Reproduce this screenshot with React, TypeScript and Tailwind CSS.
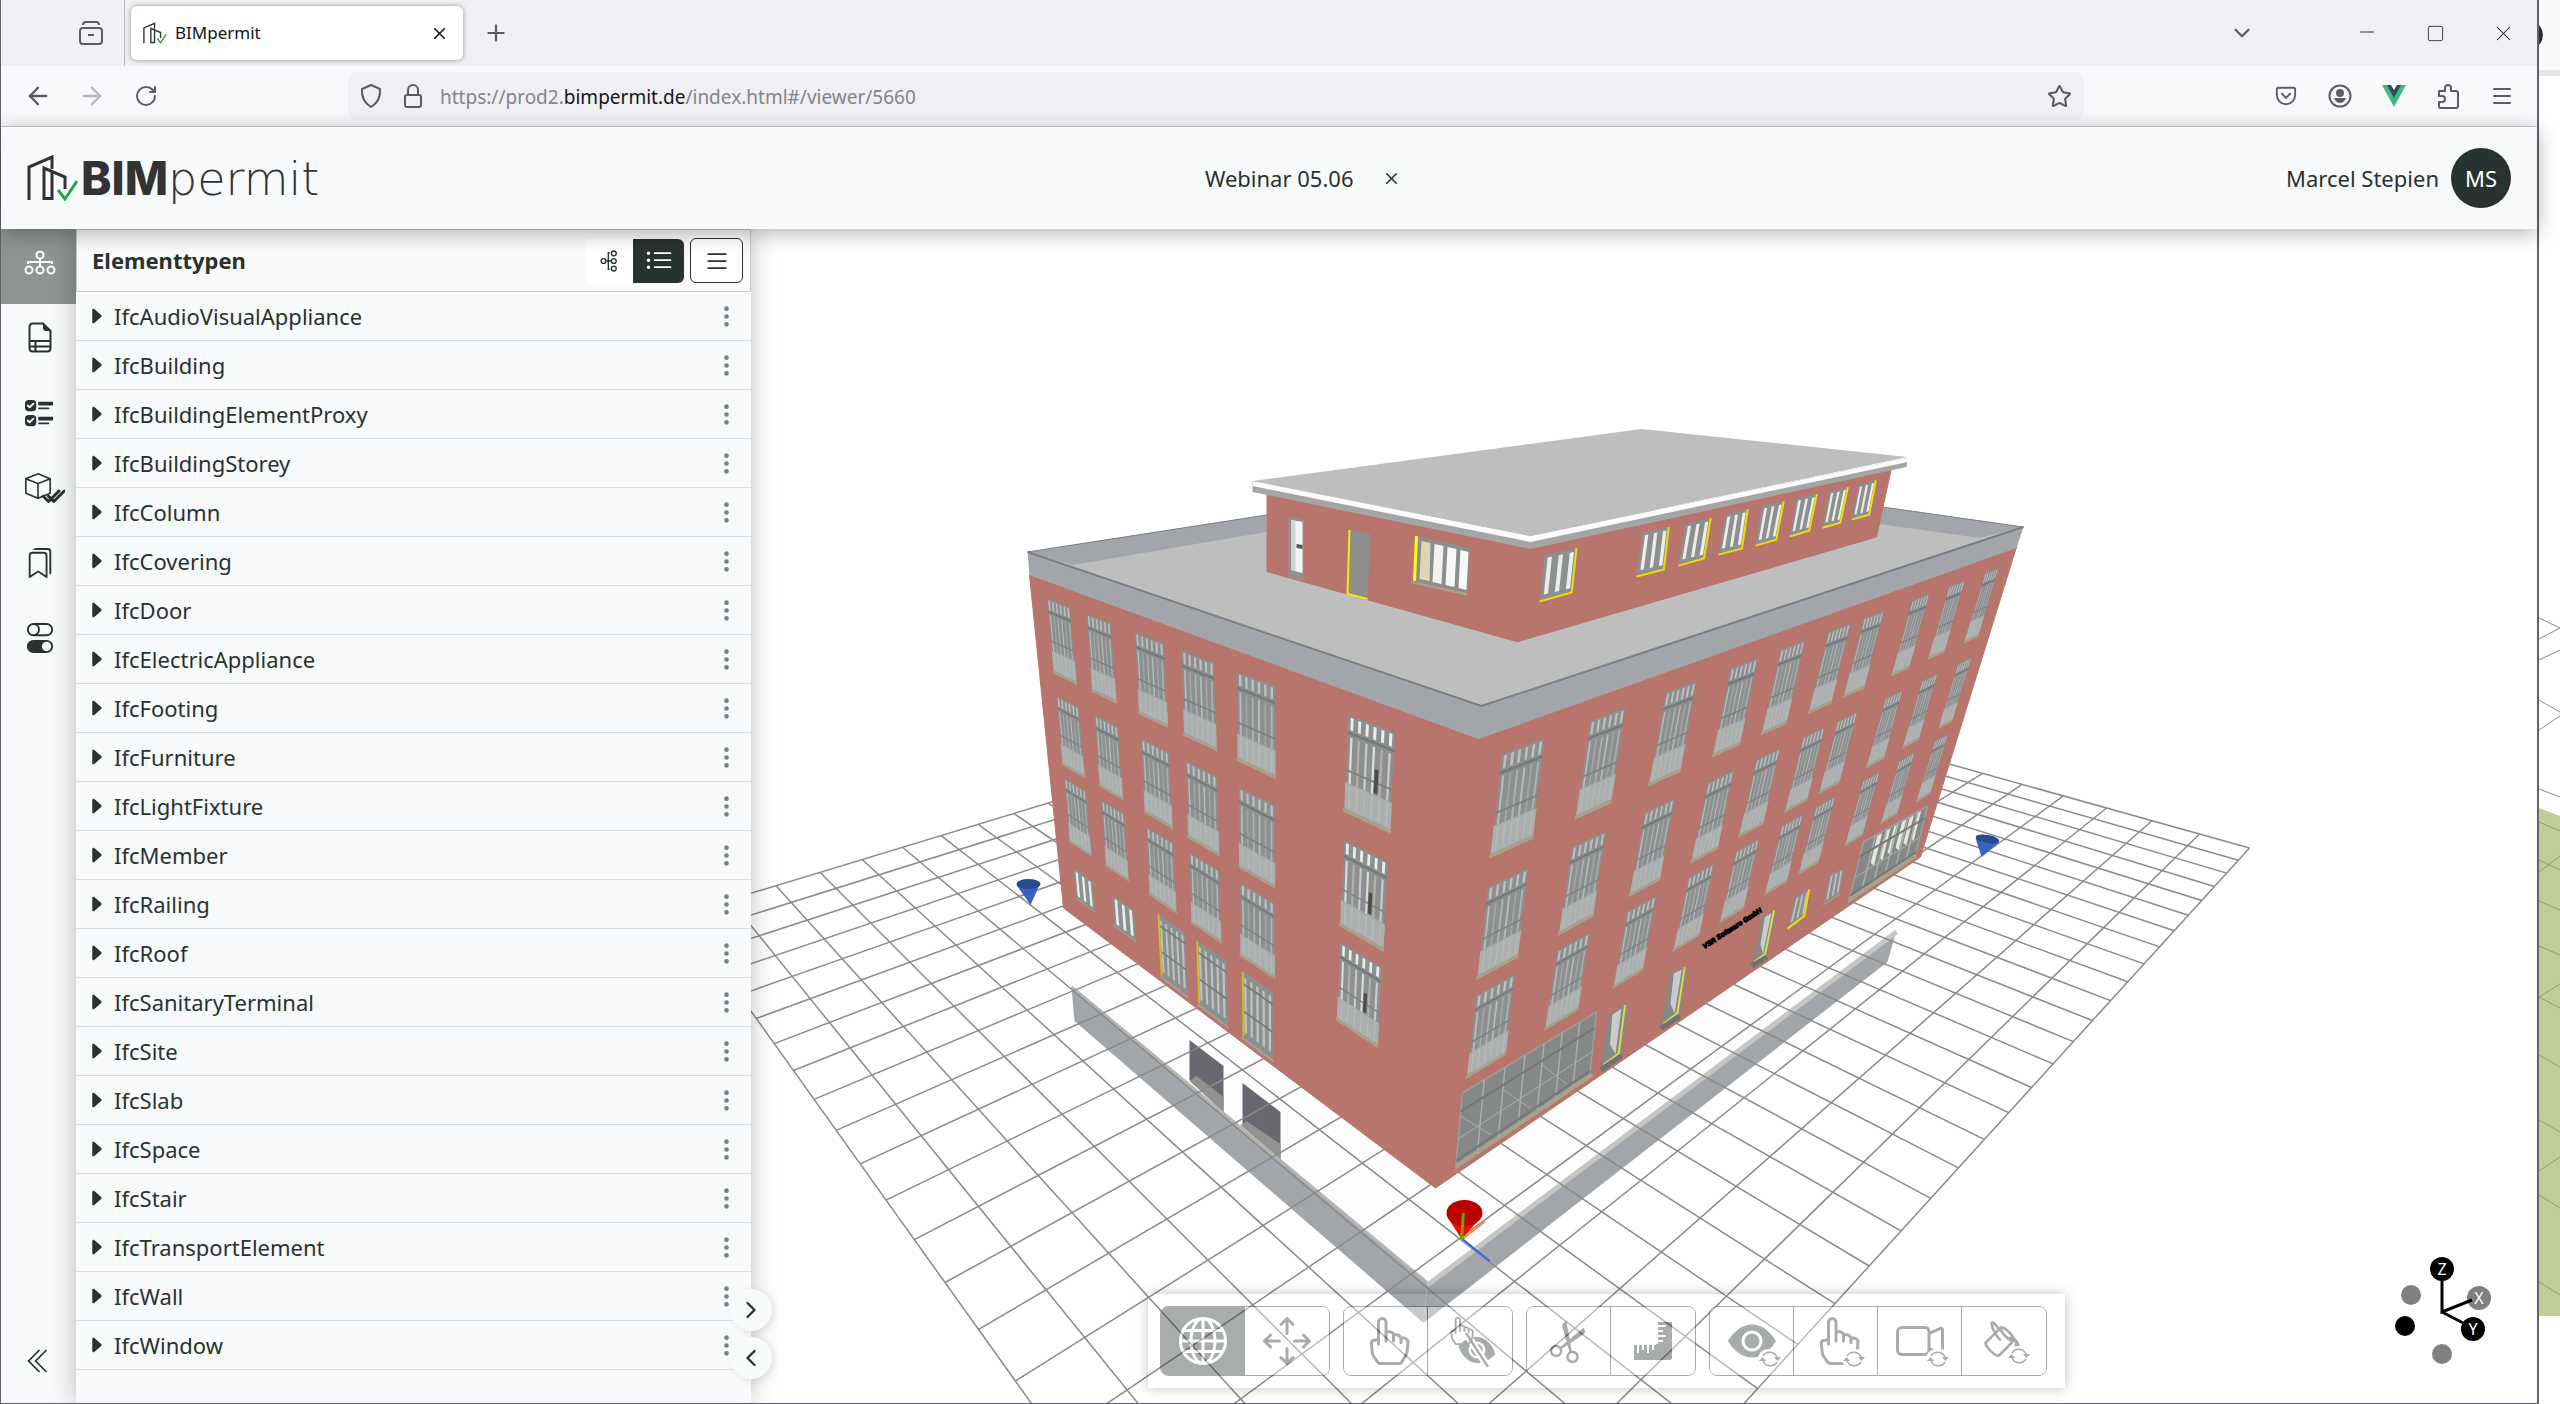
import { ArrowLeft, ArrowRight, ChevronDown, ChevronLeft, ChevronRight, Menu, Minus, Plus, RotateCw, Square, Star, X } from 'lucide-react';
import type { ReactNode } from 'react';
import {
  BsArrowsMove,
  BsBookmarks,
  BsBox,
  BsCameraVideo,
  BsCaretRightFill,
  BsCheck2All,
  BsChevronDoubleLeft,
  BsEyeFill,
  BsEyeSlashFill,
  BsGlobe,
  BsHandIndex,
  BsList,
  BsListUl,
  BsPaintBucket,
  BsScissors,
  BsThreeDotsVertical,
  BsToggles,
  BsUiChecks,
} from 'react-icons/bs';

type Point = [number, number];
type Quad = [Point, Point, Point, Point];

const elementTypes = [
  'IfcAudioVisualAppliance',
  'IfcBuilding',
  'IfcBuildingElementProxy',
  'IfcBuildingStorey',
  'IfcColumn',
  'IfcCovering',
  'IfcDoor',
  'IfcElectricAppliance',
  'IfcFooting',
  'IfcFurniture',
  'IfcLightFixture',
  'IfcMember',
  'IfcRailing',
  'IfcRoof',
  'IfcSanitaryTerminal',
  'IfcSite',
  'IfcSlab',
  'IfcSpace',
  'IfcStair',
  'IfcTransportElement',
  'IfcWall',
  'IfcWindow',
];

const pts = (points: Point[]) => points.map(([x, y]) => `${x.toFixed(1)},${y.toFixed(1)}`).join(' ');

/* ---------- projection helpers ---------- */

// maps the unit square onto a quad given as top-left, top-right, bottom-right, bottom-left
function projector([p00, p10, p11, p01]: Quad) {
  const dx1 = p10[0] - p11[0];
  const dx2 = p01[0] - p11[0];
  const dx3 = p00[0] - p10[0] + p11[0] - p01[0];
  const dy1 = p10[1] - p11[1];
  const dy2 = p01[1] - p11[1];
  const dy3 = p00[1] - p10[1] + p11[1] - p01[1];
  const det = dx1 * dy2 - dx2 * dy1;
  const g = (dx3 * dy2 - dx2 * dy3) / det;
  const h = (dx1 * dy3 - dx3 * dy1) / det;
  return (u: number, v: number): Point => {
    const w = g * u + h * v + 1;
    return [
      ((p10[0] - p00[0] + g * p10[0]) * u + (p01[0] - p00[0] + h * p01[0]) * v + p00[0]) / w,
      ((p10[1] - p00[1] + g * p10[1]) * u + (p01[1] - p00[1] + h * p01[1]) * v + p00[1]) / w,
    ];
  };
}

const leftFace: Quad = [[1030, 575], [1479, 739], [1436, 1188], [1064, 908]];
const rightFace: Quad = [[1479, 739], [2017, 547], [1921, 857], [1436, 1188]];
const onLeft = projector(leftFace);
const onRight = projector(rightFace);

const floors = [0.045, 0.307, 0.546];
const leftColumns: Point[] = [[0.054, 0.129], [0.181, 0.253], [0.321, 0.398], [0.443, 0.521], [0.573, 0.654], [0.795, 0.875]];
const groundWindows: Point[] = [[0.056, 0.125], [0.193, 0.265]];
const groundDoors: Point[] = [[0.342, 0.421], [0.454, 0.534], [0.575, 0.651]];
const rightColumns: Point[] = [
  [0.029, 0.079], [0.137, 0.185], [0.243, 0.291], [0.347, 0.394], [0.436, 0.483],
  [0.53, 0.577], [0.606, 0.652], [0.72, 0.764], [0.816, 0.86], [0.919, 0.96],
];

const penthouseWindows: Quad[] = [
  [[1545, 555], [1578, 548], [1573, 594], [1540, 602]],
  [[1643, 533], [1670, 527], [1665, 571], [1637, 577]],
  [[1686, 524], [1712, 518], [1705, 560], [1679, 566]],
  [[1726, 515], [1749, 509], [1743, 550], [1719, 555]],
  [[1763, 506], [1785, 501], [1777, 541], [1756, 546]],
  [[1797, 498], [1818, 494], [1810, 532], [1790, 537]],
  [[1830, 491], [1849, 487], [1841, 524], [1823, 528]],
  [[1859, 485], [1877, 480], [1870, 516], [1852, 520]],
];

// ground grid, 30 x 21 cells, from the right corner and the two vanishing points
function gridPoint(u: number, v: number): Point {
  const pu = u * -0.02124;
  const pv = v * 0.02539;
  const w = 1 + pu + pv;
  return [(2250 + pu * 2765 + pv * 231) / w, (848 + pu * 282 + pv * 283) / w];
}

function GroundGrid() {
  const lines: [Point, Point][] = [];
  for (let u = 0; u <= 30; u++) lines.push([gridPoint(u, 0), gridPoint(u, 21)]);
  for (let v = 0; v <= 21; v++) lines.push([gridPoint(0, v), gridPoint(30, v)]);
  return (
    <g stroke="#8a8a8a" strokeWidth="1.5">
      {lines.map(([a, b], i) => (
        <line key={i} x1={a[0]} y1={a[1]} x2={b[0]} y2={b[1]} />
      ))}
    </g>
  );
}

/* ---------- building parts ---------- */

type FrameProps = { quad: Quad; slats?: number; railing?: boolean; bright?: boolean; sill?: boolean; lit?: 'left' | 'right' };

function WindowFrame({ quad, slats = 6, railing = true, bright = false, sill = true, lit }: FrameProps) {
  const at = projector(quad);
  const strip = (u0: number, u1: number, v0: number, v1: number) => pts([at(u0, v0), at(u1, v0), at(u1, v1), at(u0, v1)]);
  const step = 1 / slats;
  const slatColors = bright ? ['#dcdcd8', '#b5b0a0', '#c9cac8'] : ['#b9bbba', '#a2a5a4', '#afb1b0'];
  return (
    <g>
      <polygon points={strip(0, 1, 0, 0.96)} fill="#8d9090" />
      {Array.from({ length: slats }, (_, i) => (
        <g key={i}>
          <polygon
            points={strip((i + 0.32) * step, (i + 0.7) * step, railing ? 0.02 : 0.07, railing ? 0.14 : 0.86)}
            fill={bright ? '#ececea' : '#bfc1c0'}
          />
          {railing && <polygon points={strip((i + 0.34) * step, (i + 0.64) * step, 0.21, 0.68)} fill={slatColors[i % 3]} />}
        </g>
      ))}
      {railing && (
        <>
          <polygon points={strip(0, 1, 0.16, 0.185)} fill="#747879" />
          <polygon points={strip(0, 1, 0.54, 0.56)} fill="#7e8182" />
          {bright && <polygon points={strip(0.62, 0.7, 0.42, 0.66)} fill="#4a4d4e" />}
          <polygon points={strip(-0.02, 1.02, 0.68, 0.95)} fill="#abafae" />
          {Array.from({ length: slats }, (_, i) => (
            <polygon key={i} points={strip((i + 0.4) * step, (i + 0.65) * step, 0.7, 0.93)} fill="#b6b9b7" />
          ))}
          <polyline points={pts([at(-0.02, 0.68), at(1.02, 0.68)])} stroke="#a5a6b8" strokeWidth="1" fill="none" />
        </>
      )}
      {sill && <polygon points={strip(-0.05, 1.03, 0.95, 0.99)} fill="#a8a08b" />}
      {lit === 'left' && (
        <>
          <polygon points={strip(0, 1, 0.15, 0.18)} fill="#777b7c" />
          <polygon points={strip(0, 1, 0.54, 0.57)} fill="#777b7c" />
          <polyline points={pts([at(0.02, 0), at(0.02, 0.93)])} stroke="#cdbb2c" strokeWidth="2" fill="none" />
        </>
      )}
      {lit === 'right' && (
        <polyline points={pts([at(0.97, 0), at(0.97, 0.96), at(0, 0.99)])} stroke="#e6e100" strokeWidth="2" fill="none" />
      )}
    </g>
  );
}

function faceWindow(at: (u: number, v: number) => Point, [u0, u1]: Point, v0: number, v1: number): Quad {
  return [at(u0, v0), at(u1, v0), at(u1, v1), at(u0, v1)];
}

function ShopFront({ quad, bright = false, bays }: { quad: Quad; bright?: boolean; bays: number }) {
  const at = projector(quad);
  return (
    <g fill="none" stroke="#a9adab" strokeWidth="1.5">
      <polygon points={pts(quad)} fill="#848886" stroke="#9b9e9c" />
      {bright &&
        [0, 1, 2, 3, 4, 5].map((i) => (
          <polygon key={i} points={pts([at(0.2 + i / 8, 0.03), at(0.27 + i / 8, 0.03), at(0.27 + i / 8, 0.6), at(0.2 + i / 8, 0.5)])} fill="#e4e4de" stroke="none" />
        ))}
      {Array.from({ length: bays - 1 }, (_, i) => (
        <polyline key={i} points={pts([at((i + 1) / bays, 0), at((i + 1) / bays, 0.95)])} />
      ))}
      {!bright && [0, 2, 4].map((i) => <polyline key={i} points={pts([at(i / bays, 0.3), at((i + 1.6) / bays, 0.85)])} strokeWidth="1" />)}
      <polyline points={pts([at(0, 0.24), at(1, 0.24)])} stroke="#747978" strokeWidth="2" />
      <polyline points={pts([at(0, 0.6), at(1, 0.6)])} strokeWidth="1" />
      <polyline points={pts([at(0, 0.89), at(1, 0.89)])} stroke="#757978" strokeWidth="2" />
      <polyline points={pts([at(0, 0.97), at(1.02, 0.97)])} stroke="#a9a18c" strokeWidth="4" />
    </g>
  );
}

function EntranceDoor({ quad }: { quad: Quad }) {
  const at = projector(quad);
  return (
    <g>
      <polygon points={pts(quad)} fill="#858a88" />
      <polygon points={pts([at(0.2, 0.04), at(0.65, 0.03), at(0.65, 0.85), at(0.3, 0.6)])} fill="#c9ccca" />
      <polyline points={pts([at(0.82, 0), at(0.82, 0.88), at(0.1, 0.9)])} stroke="#dedb45" strokeWidth="2" fill="none" />
      <polyline points={pts([at(0, 0.96), at(1, 0.96)])} stroke="#6f7374" strokeWidth="5" fill="none" />
    </g>
  );
}

function Building() {
  const brick = '#b8756d';
  const parapet = '#a2a6ab';
  return (
    <g>
      <polygon points="1028,552 1267,515 1883,507 2024,527 1482,706" fill="#bebebe" />
      <polygon points="1028,552 1267,515 1267,532 1073,565" fill={parapet} />
      <polygon points="1883,507 2024,527 1980,538 1880,524" fill={parapet} />
      <polyline points="1028,552 1267,515" fill="none" stroke="#7c8082" strokeWidth="1" />
      <polyline points="1883,507 2024,527" fill="none" stroke="#7c8082" strokeWidth="1" />

      <polygon points={pts(leftFace)} fill={brick} stroke={brick} />
      <polygon points={pts(rightFace)} fill={brick} stroke={brick} />
      <polygon points="1028,552 1482,706 2024,527 2017,548 1479,739 1030,575" fill={parapet} />
      <polyline points="1028,552 1482,706 2024,527" fill="none" stroke="#7a7f81" strokeWidth="2" />

      {floors.map((v) =>
        leftColumns.map((col, i) => (
          <WindowFrame key={`${v}-${i}`} quad={faceWindow(onLeft, col, v, v + 0.203)} bright={i === 5} />
        )),
      )}
      {groundDoors.map((col, i) => (
        <WindowFrame key={i} quad={faceWindow(onLeft, col, 0.787, 0.992)} railing={false} slats={5} lit="left" />
      ))}
      {groundWindows.map((col, i) => (
        <WindowFrame key={i} quad={faceWindow(onLeft, col, 0.828, 0.932)} railing={false} bright slats={3} />
      ))}
      {floors.map((v) =>
        rightColumns.map((col, i) => <WindowFrame key={`${v}-${i}`} quad={faceWindow(onRight, col, v, v + 0.203)} />),
      )}

      <ShopFront quad={[[1463, 1093], [1597, 1012], [1590, 1078], [1456, 1169]]} bays={7} />
      <ShopFront quad={[[1864, 842], [1928, 806], [1915, 858], [1849, 902]]} bays={6} bright />
      <EntranceDoor quad={[[1609, 1015], [1629, 1003], [1622, 1058], [1601, 1072]]} />
      <EntranceDoor quad={[[1671, 973], [1688, 966], [1680, 1018], [1661, 1031]]} />
      <EntranceDoor quad={[[1763, 917], [1777, 909], [1767, 959], [1752, 968]]} />
      <WindowFrame quad={[[1796, 897], [1810, 889], [1805, 917], [1788, 929]]} railing={false} slats={3} lit="right" />
      <WindowFrame quad={[[1830, 875], [1844, 868], [1840, 895], [1824, 906]]} railing={false} slats={3} />
      <text
        transform="translate(1705 949) rotate(-33)"
        className="font-['Liberation_Sans',sans-serif] text-[7px] font-bold italic"
        fill="#000"
        stroke="#000"
        strokeWidth="1"
      >
        VSR Software GmbH
      </text>

      <polygon points="1267,492 1531,546 1517,642 1267,572" fill={brick} />
      <polygon points="1531,546 1892,468 1877,537 1517,642" fill={brick} stroke={brick} />
      <polygon points="1253,481 1531,536 1908,458 1907,467 1531,549 1253,492" fill="#a5a5a5" />
      <polygon points="1253,481 1531,536 1908,458 1908,462 1531,542 1253,486" fill="#fcfcfc" />
      <polygon points="1253,481 1642,429 1908,457 1531,536" fill="#bebebe" />

      <polygon points="1289,517 1304,520 1304,581 1289,577" fill="#8f9393" />
      <polygon points="1292,520 1303,522 1303,573 1292,570" fill="#f4f6f5" />
      <polygon points="1292,520 1296,521 1296,571 1292,570" fill="#d3d5d3" />
      <polygon points="1297,544 1303,545 1303,549 1297,548" fill="#5f5753" />
      <polygon points="1349,530 1371,534 1368,599 1348,594" fill="#8e8e8e" />
      <polyline points="1350,530 1348,594 1368,599" fill="none" stroke="#f0ee00" strokeWidth="2" />

      <polygon points="1416,536 1471,548 1468,592 1414,581" fill="#8b8f90" />
      <polygon points="1422,541 1431,543 1430,581 1420,579" fill="#ded6b7" />
      <polygon points="1435,544 1444,546 1442,584 1433,582" fill="#f2f1ea" />
      <polygon points="1448,547 1457,549 1455,587 1446,585" fill="#f7f8f8" />
      <polygon points="1461,550 1469,552 1467,590 1459,588" fill="#f7f8f8" />
      <polygon points="1412,581 1468,593 1468,596 1411,583" fill="#a8a08b" />
      <polyline points="1417,536 1415,581" fill="none" stroke="#ffff00" strokeWidth="3" />
      {penthouseWindows.map((quad, i) => (
        <WindowFrame key={i} quad={quad} railing={false} bright slats={3} sill={false} lit="right" />
      ))}
    </g>
  );
}

function Scene() {
  return (
    <svg viewBox="751 229 1787 1174" preserveAspectRatio="xMidYMid slice" className="h-full w-full" role="img" aria-label="3D-Modell">
      <polygon points="1064,908 1073,987 1428,1283 1897,932 1921,857 1436,1188" fill="#fcfcfc" />
      <polygon points="1190,1040 1224,1066 1224,1112 1190,1080" fill="#686970" />
      <polygon points="1197,1076 1224,1097 1224,1112 1190,1081" fill="#949290" />
      <polygon points="1243,1083 1281,1112 1281,1160 1243,1124" fill="#686970" />
      <polygon points="1247,1121 1281,1144 1281,1160 1241,1125" fill="#949290" />
      <polygon points="1072,987 1428,1283 1424,1323 1075,1021" fill="#a2a5aa" />
      <polygon points="1897,930 1428,1283 1424,1323 1888,962" fill="#a2a5aa" />
      <polyline points="1072,987 1428,1283" fill="none" stroke="#b4b4b1" strokeWidth="3" />
      <polyline points="1897,932 1428,1285" fill="none" stroke="#c6c6c4" strokeWidth="5" />
      <GroundGrid />
      <Building />

      <polygon points="1017,885 1040,885 1031,905" fill="#3a62c4" />
      <ellipse cx="1029" cy="884" rx="12" ry="5" fill="#2b4a8c" />
      <polygon points="1976,838 2000,842 1982,857" fill="#3a62c4" />
      <ellipse cx="1988" cy="839" rx="12" ry="4" fill="#2b4a8c" transform="rotate(10 1988 839)" />
      <polygon points="1448,1217 1482,1217 1462,1239" fill="#ff0000" />
      <ellipse cx="1465" cy="1213" rx="18" ry="13" fill="#bb0000" />
      <line x1="1463" y1="1239" x2="1485" y2="1222" stroke="#ff8c3a" strokeWidth="2" />
      <line x1="1462" y1="1239" x2="1464" y2="1213" stroke="#6aa500" strokeWidth="3" />
      <line x1="1463" y1="1239" x2="1490" y2="1261" stroke="#2a6af0" strokeWidth="2" />
    </svg>
  );
}

function AxisGizmo() {
  return (
    <svg viewBox="0 0 100 112" className="absolute right-[43px] bottom-9 h-28 w-[100px] font-['Noto_Sans',sans-serif] text-[16px]" aria-label="Achsen">
      <circle cx="17" cy="40" r="10" fill="#808080" />
      <circle cx="48" cy="99" r="10" fill="#808080" />
      <circle cx="11" cy="71" r="10" />
      <circle cx="85" cy="43" r="12" fill="#808080" />
      <circle cx="48" cy="14" r="12" />
      <circle cx="79" cy="74" r="12" />
      <path d="M48 14v43l30-12M48 57l25 13" fill="none" stroke="#000" strokeWidth="3" />
      <g fill="#fff" textAnchor="middle">
        <text x="48" y="20">Z</text>
        <text x="85" y="49">X</text>
        <text x="79" y="80">Y</text>
      </g>
    </svg>
  );
}

/* ---------- icons ---------- */

function LogoMark({ className }: { className: string }) {
  return (
    <svg viewBox="0 0 52 46" fill="none" className={className} aria-hidden="true">
      <path d="M2 45V12L25 2v12M17 45V13l21 9v12M17 43.5h8V17" stroke="#333" strokeWidth="3" />
      <path d="M31 35l7 9 12-18" stroke="#23a84a" strokeWidth="3" />
    </svg>
  );
}

function TreeIcon({ className }: { className: string }) {
  return (
    <svg viewBox="0 0 32 26" fill="none" stroke="currentColor" strokeWidth="2" className={className}>
      <circle cx="16" cy="5" r="3.5" />
      <circle cx="5" cy="20" r="3.5" />
      <circle cx="16" cy="20" r="3.5" />
      <circle cx="27" cy="20" r="3.5" />
      <path d="M16 9v7M4 14v-2h24v2" />
    </svg>
  );
}

function SheetIcon() {
  return (
    <svg viewBox="0 0 24 31" fill="none" stroke="currentColor" strokeWidth="2" className="h-[31px] w-6">
      <path d="M15 1.5H5q-3.5 0-3.5 3.5v21q0 3.5 3.5 3.5h14q3.5 0 3.5-3.5V9zM2 19h20M2 24.5h20M7.500 19v10" />
      <path d="M15 1.5v4.500q0 3 3 3h4.500z" fill="currentColor" stroke="none" />
    </svg>
  );
}

function RulerIcon() {
  return (
    <svg viewBox="0 0 40 40" className="size-10">
      <path d="M25 1h14v36q0 2-2 2H1V24h22v-1h2z" fill="currentColor" />
      <path d="M25 5h8M25 10h5M25 15h8M25 20h5M5 24v8M10 24v5M15 24v8M20 24v5" stroke="#fff" strokeWidth="2" />
    </svg>
  );
}

function ResetArrows() {
  return (
    <svg viewBox="0 0 24 20" fill="none" stroke="currentColor" className="absolute -right-1.5 -bottom-1 h-5 w-6 rounded-full bg-white">
      <path d="M5 7a8 8 0 0 1 14 1M19 13a8 8 0 0 1-14-1" strokeWidth="1.5" />
      <path d="M16 8h7l-3.500 4zM1 12h7L4.500 8z" fill="currentColor" stroke="none" />
    </svg>
  );
}

/* ---------- browser chrome ---------- */

function ChromeButton({ label, children }: { label: string; children: ReactNode }) {
  return (
    <button aria-label={label} className="flex w-[54px] items-center justify-center">
      {children}
    </button>
  );
}

function TabBar() {
  return (
    <div className="flex h-[66px] items-center bg-[#f0eff4] text-[#5b5b66]">
      <button aria-label="Ansicht" className="flex h-full w-[124px] items-center justify-end border-r border-[#b8b8be] pr-5">
        <svg viewBox="0 0 26 26" fill="none" stroke="currentColor" strokeWidth="2" className="size-[26px]">
          <rect x="2" y="8" width="22" height="16" rx="3" />
          <path d="M5 5q0-3 3-3h10q3 0 3 3M10 15h6" />
        </svg>
      </button>
      <div className="ml-1.5 flex h-[54px] w-[332px] items-center rounded-md bg-white pr-2 pl-3 text-[#15141a] shadow-[0_0_5px_rgba(0,0,0,0.4)]">
        <LogoMark className="h-[22px] w-6" />
        <span className="ml-2 flex-1 text-[17px]">BIMpermit</span>
        <button aria-label="Tab schließen" className="p-1.5">
          <X size={19} strokeWidth={2} />
        </button>
      </div>
      <button aria-label="Neuer Tab" className="ml-5">
        <Plus size={26} strokeWidth={2} />
      </button>
      <button aria-label="Tabs auflisten" className="mr-[78px] ml-auto">
        <ChevronDown size={26} strokeWidth={2} />
      </button>
      <div className="flex text-[#15141a]">
        <button aria-label="Minimieren" className="flex w-[68px] justify-center">
          <Minus size={22} strokeWidth={1} />
        </button>
        <button aria-label="Maximieren" className="flex w-[68px] items-center justify-center">
          <Square size={19} strokeWidth={1} />
        </button>
        <button aria-label="Schließen" className="flex w-[68px] justify-center">
          <X size={25} strokeWidth={1} />
        </button>
      </div>
    </div>
  );
}

function AddressBar() {
  return (
    <div className="flex h-[61px] items-center border-b border-[#ccccd0] bg-[#f9f9fb] text-[#5b5b66]">
      <div className="flex w-[347px] pl-2.5">
        <ChromeButton label="Zurück">
          <ArrowLeft size={28} strokeWidth={2} />
        </ChromeButton>
        <ChromeButton label="Vor">
          <ArrowRight size={28} strokeWidth={2} className="text-[#b9b9bf]" />
        </ChromeButton>
        <ChromeButton label="Neu laden">
          <RotateCw size={24} strokeWidth={2} />
        </ChromeButton>
      </div>
      <div className="flex h-12 flex-1 items-center rounded-md bg-[#f0eff4] pr-3 pl-[11px]">
        <svg viewBox="0 0 24 26" fill="none" stroke="currentColor" strokeWidth="2" className="h-[26px] w-6">
          <path d="M12 2l9 4q1 12-9 18Q2 18 3 6z" strokeLinejoin="round" />
        </svg>
        <svg viewBox="0 0 20 26" fill="none" stroke="currentColor" strokeWidth="2" className="ml-5 h-[26px] w-5">
          <rect x="2" y="12" width="16" height="12" rx="2" />
          <path d="M5 12V7a5 5 0 0 1 10 0v5" />
        </svg>
        <span className="ml-[17px] flex-1 pt-0.5 text-[19px] text-[#84848b]">
          https://prod2.<span className="text-[#15141a]">bimpermit.de</span>/index.html#/viewer/5660
        </span>
        <button aria-label="Lesezeichen">
          <Star size={25} strokeWidth={2} />
        </button>
      </div>
      <div className="ml-[175px] flex pr-2">
        <ChromeButton label="Pocket">
          <svg viewBox="0 0 24 24" fill="none" stroke="currentColor" strokeWidth="2" className="size-[22px]">
            <path d="M4 3h16q2 0 2 2v6a10 10 0 0 1-20 0V5q0-2 2-2zM7 9l5 5 5-5" />
          </svg>
        </ChromeButton>
        <ChromeButton label="Konto">
          <svg viewBox="0 0 24 24" fill="none" stroke="currentColor" strokeWidth="2" className="size-6">
            <circle cx="12" cy="12" r="10.5" />
            <circle cx="12" cy="9" r="3" fill="currentColor" />
            <path d="M6 14h12q-2 5-6 5t-6-5z" fill="currentColor" stroke="none" />
          </svg>
        </ChromeButton>
        <ChromeButton label="Vue Devtools">
          <svg viewBox="0 0 24 22" className="h-[22px] w-6">
            <path d="M0 0h24L12 22z" fill="#41b883" />
            <path d="M5 0h5l2 4 2-4h5l-7 13z" fill="#34495e" />
            <path d="M9 0h6l-3 5z" fill="#f9f9fb" />
          </svg>
        </ChromeButton>
        <ChromeButton label="Erweiterungen">
          <svg viewBox="0 0 24 26" fill="none" stroke="currentColor" strokeWidth="2" strokeLinejoin="round" className="h-[26px] w-6">
            <path d="M3 8h6V5a3 3 0 0 1 6 0v3h5q2 0 2 2v13q0 2-2 2H5q-2 0-2-2v-4h3a3 3 0 0 0 0-6H3z" />
          </svg>
        </ChromeButton>
        <ChromeButton label="Menü">
          <Menu size={24} strokeWidth={2} />
        </ChromeButton>
      </div>
    </div>
  );
}

/* ---------- app ---------- */

function AppHeader() {
  return (
    <header className="relative z-20 flex h-[102px] items-center justify-between bg-[#f8f9fb] px-[26px] shadow-[0_4px_20px_rgba(0,0,0,0.3)]">
      <a href="#/" aria-label="BIMpermit" className="flex items-center text-[#333]">
        <LogoMark className="h-[46px] w-[52px]" />
        <span className="ml-0.5 font-['DejaVu_Sans',sans-serif] text-[46px] leading-none font-extralight">
          <b className="font-['Inter',sans-serif] font-extrabold">BIM</b>permit
        </span>
      </a>
      <div className="flex items-center gap-7 text-[22px]">
        <h1>Webinar 05.06</h1>
        <button aria-label="Projekt schließen">
          <X size={19} strokeWidth={2} />
        </button>
      </div>
      <div className="flex items-center gap-3 text-[22px]">
        <span>Marcel Stepien</span>
        <span className="flex size-[60px] items-center justify-center rounded-full bg-[#283230] text-white">MS</span>
      </div>
    </header>
  );
}

const railItems: { label: string; icon: ReactNode }[] = [
  { label: 'Struktur', icon: <TreeIcon className="h-[26px] w-8" /> },
  { label: 'Dokumente', icon: <SheetIcon /> },
  { label: 'Prüfungen', icon: <BsUiChecks size={30} /> },
  {
    label: 'Modellprüfung',
    icon: (
      <span className="relative mr-1 mb-1">
        <BsBox size={26} />
        <BsCheck2All size={24} className="absolute top-3 left-4" strokeWidth={1} />
      </span>
    ),
  },
  { label: 'Lesezeichen', icon: <BsBookmarks size={30} /> },
  { label: 'Optionen', icon: <BsToggles size={30} /> },
];

function Rail() {
  return (
    <nav className="flex w-[75px] flex-col bg-[#f8f9fb]">
      {railItems.map((item, i) => (
        <button
          key={item.label}
          aria-label={item.label}
          className={`flex h-[75px] items-center justify-center pb-2 pl-0.5 ${i === 0 ? 'bg-[#8f9392] text-white' : ''}`}
        >
          {item.icon}
        </button>
      ))}
      <button aria-label="Einklappen" className="mt-auto flex h-[84px] items-center justify-center">
        <BsChevronDoubleLeft size={28} />
      </button>
    </nav>
  );
}

function ElementPanel() {
  return (
    <aside className="relative z-10 flex w-[675px] flex-col bg-[#f8f9fb] shadow-[0_0_24px_rgba(0,0,0,0.25)]">
      <div className="flex h-[63px] items-center border border-[#c8cacb] bg-[#fafafa] pr-[7px] pl-[15px]">
        <h2 className="flex-1 text-[22px] font-bold">Elementtypen</h2>
        <div className="flex overflow-hidden rounded-md">
          <button aria-label="Baumansicht" className="flex h-11 w-12 items-center justify-center bg-white">
            <TreeIcon className="h-[18px] w-[22px] -rotate-90" />
          </button>
          <button aria-label="Listenansicht" className="flex h-11 w-[51px] items-center justify-center bg-[#283230] text-white">
            <BsListUl size={28} />
          </button>
        </div>
        <button aria-label="Menü" className="ml-1.5 flex h-[45px] w-[53px] items-center justify-center rounded-md border border-[#283230] bg-white">
          <BsList size={28} />
        </button>
      </div>
      <ul>
        {elementTypes.map((name) => (
          <li key={name} className="flex h-[49px] items-center border-b border-[#dcdfe2] pr-3 pl-2.5">
            <button aria-expanded="false" className="flex flex-1 items-center gap-2 text-[22px]">
              <BsCaretRightFill size={20} />
              {name}
            </button>
            <button aria-label={`Aktionen für ${name}`} className="text-[#7b7f80]">
              <BsThreeDotsVertical size={25} />
            </button>
          </li>
        ))}
      </ul>
      <div className="absolute -right-[21px] bottom-6 flex flex-col gap-1.5">
        <button aria-label="Panel erweitern" className="flex size-[42px] items-center justify-center rounded-full bg-[#f8f9fb] shadow-[4px_2px_8px_rgba(0,0,0,0.1)]">
          <ChevronRight size={28} strokeWidth={2} />
        </button>
        <button aria-label="Panel verkleinern" className="flex size-[42px] items-center justify-center rounded-full bg-[#f8f9fb] shadow-[4px_2px_8px_rgba(0,0,0,0.1)]">
          <ChevronLeft size={28} strokeWidth={2} />
        </button>
      </div>
    </aside>
  );
}

function WithReset({ children }: { children: ReactNode }) {
  return (
    <span className="relative">
      {children}
      <ResetArrows />
    </span>
  );
}

const toolGroups: { label: string; icon: ReactNode; active?: boolean }[][] = [
  [
    { label: 'Orbit', icon: <BsGlobe size={48} />, active: true },
    { label: 'Verschieben', icon: <BsArrowsMove size={48} /> },
  ],
  [
    { label: 'Auswählen', icon: <BsHandIndex size={48} /> },
    {
      label: 'Ausblenden',
      icon: (
        <span className="relative size-12">
          <BsHandIndex size={28} />
          <BsEyeSlashFill size={38} className="absolute top-3.5 left-3 rotate-12" />
        </span>
      ),
    },
  ],
  [
    { label: 'Schneiden', icon: <BsScissors size={40} className="rotate-[20deg]" /> },
    { label: 'Messen', icon: <RulerIcon /> },
  ],
  [
    { label: 'Sichtbarkeit zurücksetzen', icon: <WithReset><BsEyeFill size={48} /></WithReset> },
    { label: 'Auswahl zurücksetzen', icon: <WithReset><BsHandIndex size={48} /></WithReset> },
    { label: 'Kamera zurücksetzen', icon: <WithReset><BsCameraVideo size={48} /></WithReset> },
    { label: 'Farben zurücksetzen', icon: <WithReset><BsPaintBucket size={42} /></WithReset> },
  ],
];

function ViewerToolbar() {
  return (
    <div className="absolute bottom-[15px] left-[397px] flex gap-[13px] py-3 pr-[18px] pl-3 shadow-[0_0_12px_rgba(0,0,0,0.25)]">
      {toolGroups.map((group, i) => (
        <div key={i} className="flex h-[70px] divide-x divide-[#283230] overflow-hidden rounded-lg border border-[#283230] opacity-40">
          {group.map((tool) => (
            <button
              key={tool.label}
              aria-label={tool.label}
              className={`flex w-[84px] items-center justify-center ${tool.active ? 'bg-[#283230] text-white' : 'bg-white'}`}
            >
              {tool.icon}
            </button>
          ))}
        </div>
      ))}
    </div>
  );
}

// sliver of the window lying behind this one
function BackgroundWindow() {
  return (
    <svg viewBox="0 0 21 1404" preserveAspectRatio="none" className="h-full w-[21px] bg-white" aria-hidden="true">
      <rect width="21" height="70" fill="#f8f9fb" />
      <rect y="70" width="21" height="6" fill="#e6e6e6" />
      <circle cx="-10" cy="35" r="14" fill="#283230" />
      <path d="M0 618l21 10-21 11M0 789l21 8" stroke="#8a8a8a" fill="none" />
      <path d="M0 700l21 12M0 730l21-14M0 660l21-10" stroke="#8a8a8a" fill="none" />
      <path d="M0 808l21 8v500H0z" fill="#c1cd97" />
      <path d="M0 822l21 9M0 860l21 10M0 872l21-16M0 901l21 9M0 946l21 9M0 997l21-13M0 997l21 11M0 1055l21 12M0 1120l21 12M0 1171l21-14M0 1195l21 13M0 1282l21 13" stroke="#8f9a80" fill="none" />
    </svg>
  );
}

export default function App() {
  return (
    <div className="flex h-screen overflow-hidden font-['Noto_Sans','Liberation_Sans',sans-serif] text-[#283230]">
      <div className="flex min-w-0 flex-1 flex-col border-r-2 border-b border-l border-[#62626a]">
        <TabBar />
        <AddressBar />
        <AppHeader />
        <div className="flex min-h-0 flex-1">
          <Rail />
          <ElementPanel />
          <main className="relative min-w-0 flex-1 bg-white">
            <Scene />
            <ViewerToolbar />
            <AxisGizmo />
          </main>
        </div>
      </div>
      <BackgroundWindow />
    </div>
  );
}
